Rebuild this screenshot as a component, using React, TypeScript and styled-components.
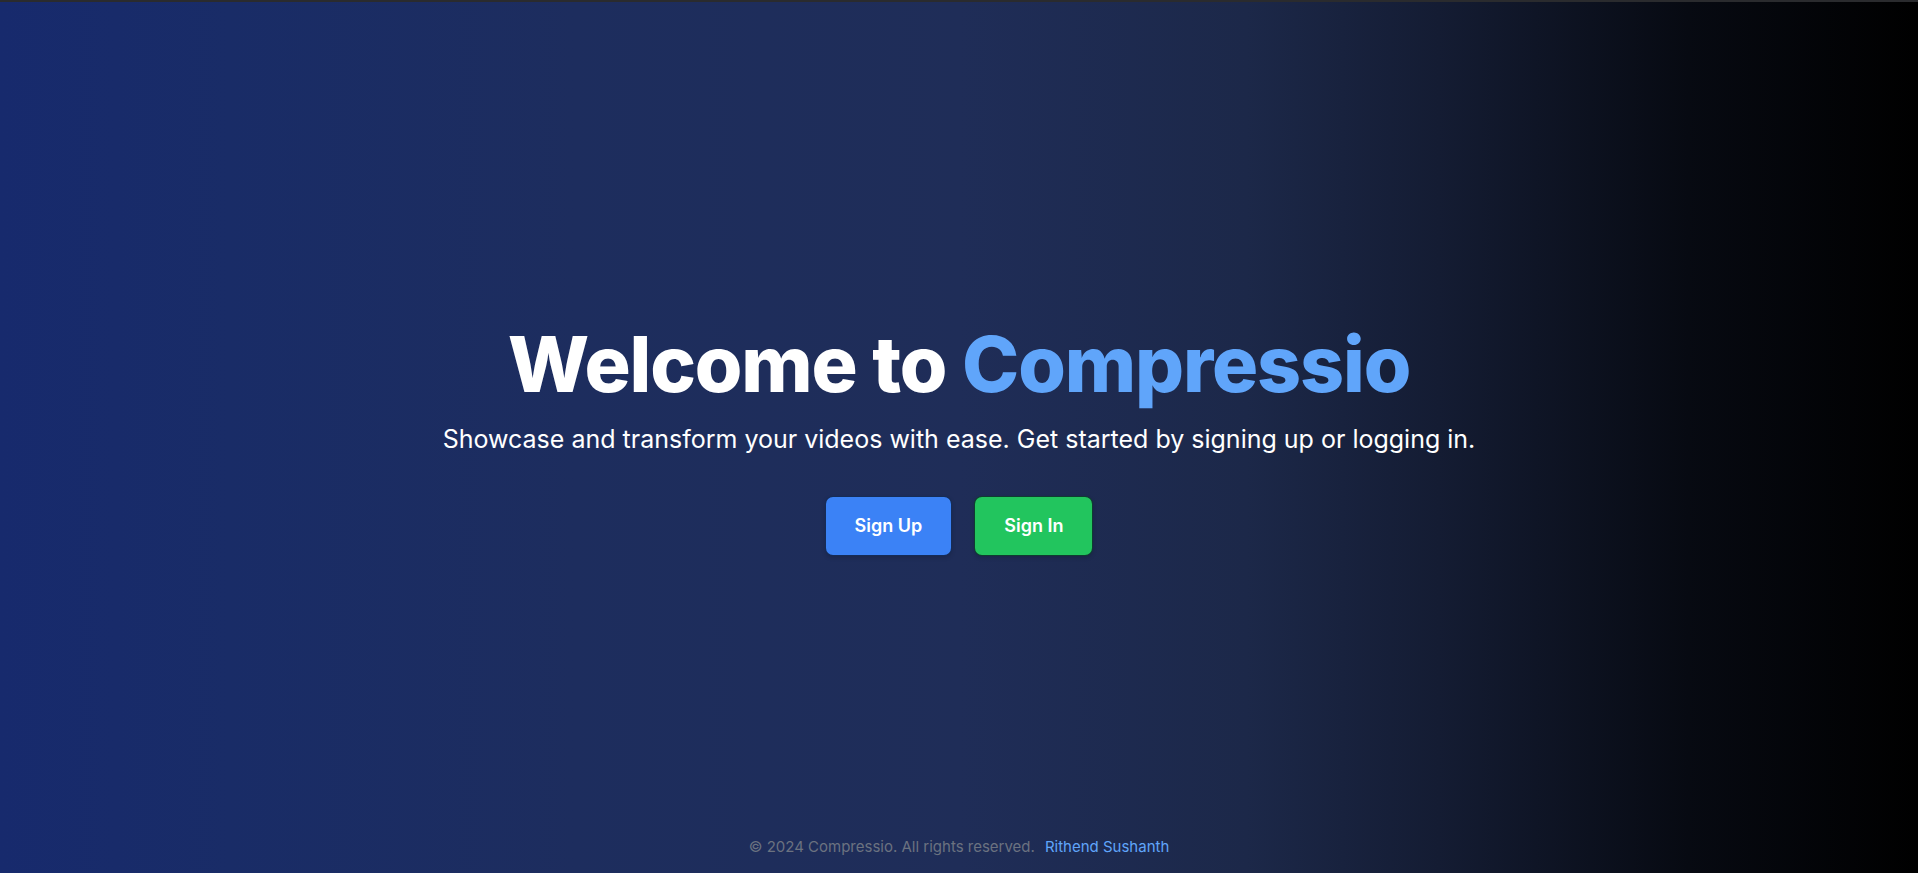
import React from "react";
import styled, { createGlobalStyle } from "styled-components";

const GlobalStyle = createGlobalStyle`
  *, *::before, *::after { box-sizing: border-box; }
  html, body { margin: 0; padding: 0; height: 100%; }
  body {
    font-family: Inter, "Noto Sans", "Liberation Sans", sans-serif;
    -webkit-font-smoothing: antialiased;
  }
  #root { min-height: 100vh; }
`;

const Page = styled.div`
  min-height: 100vh;
  display: flex;
  flex-direction: column;
  border-top: 2px solid #2a2b2e;
  background: linear-gradient(
    to right,
    #172a6d 0%,
    #192c67 12%,
    #1d2d5e 30%,
    #1f2d58 50%,
    #1c2849 65%,
    #141c33 75%,
    #070a12 88%,
    #000000 100%
  );
`;

const Main = styled.main`
  flex: 1;
  display: flex;
  flex-direction: column;
  align-items: center;
  justify-content: center;
  padding-top: 58px;
  text-align: center;
`;

const Title = styled.h1`
  margin: 0;
  font-size: 77px;
  line-height: 1;
  font-weight: 800;
  letter-spacing: -0.015em;
  color: #ffffff;
`;

const Accent = styled.span`
  color: #60a5fa;
`;

const Subtitle = styled.p`
  margin: 20px 0 0;
  font-size: 25px;
  line-height: 32px;
  font-weight: 400;
  color: #ffffff;
`;

const Actions = styled.div`
  display: flex;
  gap: 22px;
  margin-top: 41px;
`;

const Button = styled.button<{ $tone: "blue" | "green" }>`
  font-family: inherit;
  font-size: 18px;
  line-height: 28px;
  font-weight: 600;
  color: #ffffff;
  padding: 15px 29px;
  border-radius: 8px;
  border: 1px solid rgba(10, 15, 35, 0.75);
  background: ${(p) => (p.$tone === "blue" ? "#3b82f6" : "#22c55e")};
  box-shadow: 0 2px 4px rgba(0, 0, 0, 0.15);
  cursor: pointer;
`;

const Footer = styled.footer`
  padding: 16px 0;
  text-align: center;
  font-size: 15px;
  line-height: 20px;
  color: #6b7280;
`;

const Author = styled.a`
  color: #60a5fa;
  margin-left: 10px;
  text-decoration: none;
`;

export default function App() {
  return (
    <>
      <GlobalStyle />
      <Page>
        <Main>
          <Title>
            Welcome to <Accent>Compressio</Accent>
          </Title>
          <Subtitle>
            Showcase and transform your videos with ease. Get started by signing up or logging in.
          </Subtitle>
          <Actions>
            <Button $tone="blue">Sign Up</Button>
            <Button $tone="green">Sign In</Button>
          </Actions>
        </Main>
        <Footer>
          © 2024 Compressio. All rights reserved.
          <Author href="#">Rithend Sushanth</Author>
        </Footer>
      </Page>
    </>
  );
}
